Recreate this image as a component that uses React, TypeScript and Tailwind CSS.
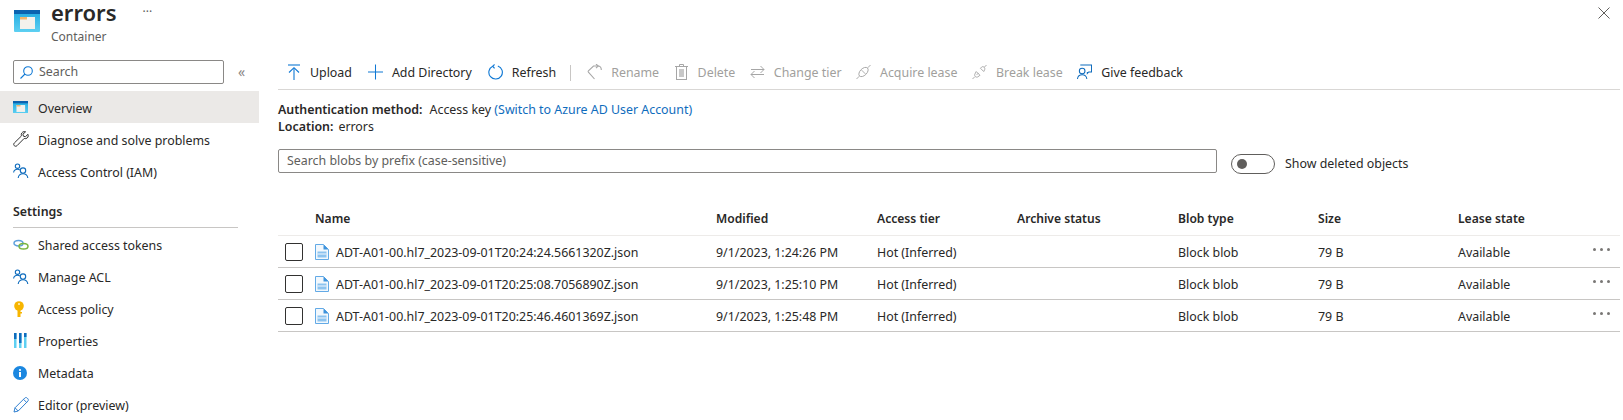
import React from "react";

const Users = () => (
  <svg width="16" height="16" viewBox="0 0 16 16" fill="none" stroke="#0f6cbd" strokeWidth="1.100">
    <circle cx="4.500" cy="3.200" r="2.200" />
    <path d="M0.600 9.500c.3-2 1.800-3.200 3.900-3.200 1 0 1.700.2 2.300.7" />
    <circle cx="10" cy="7.600" r="2.700" />
    <path d="M5.200 15c.3-2.600 2.200-4.200 4.800-4.200s4.500 1.600 4.800 4.200" />
  </svg>
);

const ContainerIcon = ({ s }: { s: number }) => (
  <svg width={s} height={(s * 22) / 26} viewBox="0 0 26 22">
    <defs>
      <linearGradient id={"cg" + s} x1="0" y1="0" x2="0" y2="1">
        <stop offset="0" stopColor="#1fa8e0" />
        <stop offset="1" stopColor="#5ed0f2" />
      </linearGradient>
    </defs>
    <rect x="0" y="0" width="26" height="22" rx="1" fill={"url(#cg" + s + ")"} />
    <rect x="0" y="0" width="26" height="4" fill="#0b63b0" />
    <rect x="6" y="7" width="15" height="12" fill="#f3f1ec" />
    <rect x="6" y="7" width="7" height="2.500" fill="#f2b56a" />
  </svg>
);

const Wrench = () => (
  <svg width="16" height="16" viewBox="0 0 16 16" fill="none" stroke="#333" strokeWidth="1">
    <path d="M15 3.300l-2.600 2.400-2-.5-.5-2L12.600.8C10.600.1 8.500 1.300 8.300 3.400c0 .6 0 1.100.2 1.500L1.300 12c-.9.900-.7 2 0 2.700s1.800.8 2.700 0l7.200-7.300c.5.200 1 .3 1.600.2 2-.3 3-2.400 2.200-4.300z" />
  </svg>
);

const Links = () => (
  <svg width="16" height="14" viewBox="0 0 16 14" fill="none" strokeWidth="1.500">
    <ellipse cx="5.500" cy="5.200" rx="4.500" ry="2.800" stroke="#5ea0dc" />
    <ellipse cx="10.500" cy="8.200" rx="4.500" ry="2.800" stroke="#7ab541" />
  </svg>
);

const Key = () => (
  <svg width="12" height="16" viewBox="0 0 12 16">
    <circle cx="6" cy="5" r="4.800" fill="#f7b500" />
    <rect x="4.500" y="6" width="3" height="10" fill="#f7b500" />
    <rect x="7" y="11" width="2" height="1.500" fill="#f7b500" />
    <circle cx="6" cy="3" r="1" fill="#fff3c4" />
  </svg>
);

const Props = () => (
  <svg width="14" height="16" viewBox="0 0 14 16">
    <rect x="1" y="0" width="2.500" height="15" fill="#5ed0f2" />
    <rect x="1" y="0" width="2.500" height="6" fill="#0f6cbd" />
    <rect x="6" y="0" width="2.500" height="15" fill="#5ed0f2" />
    <rect x="6" y="0" width="2.500" height="10" fill="#0f6cbd" />
    <rect x="11" y="0" width="2.500" height="15" fill="#5ed0f2" />
    <rect x="11" y="0" width="2.500" height="4" fill="#0f6cbd" />
  </svg>
);

const Info = () => (
  <svg width="14" height="14" viewBox="0 0 14 14">
    <circle cx="7" cy="7" r="7" fill="#1b87e0" />
    <rect x="6" y="6" width="2" height="5" fill="#fff" />
    <circle cx="7" cy="4" r="1.100" fill="#fff" />
  </svg>
);

const Pencil = () => (
  <svg width="16" height="16" viewBox="0 0 16 16" fill="none" stroke="#2f7fd0" strokeWidth="1">
    <path d="M1 15l1-4.200L11.800 1c.7-.6 1.700-.6 2.300 0l.8.800c.6.700.6 1.600 0 2.300L5.200 14z" />
    <path d="M2 10.800L5.200 14" />
    <path d="M10.500 2.300l3.200 3.200" />
  </svg>
);

const Upload = () => (
  <svg width="14" height="16" viewBox="0 0 14 16" fill="none" stroke="#0f78d4" strokeWidth="1.100">
    <path d="M1 1h12" />
    <path d="M7 16V4" />
    <path d="M2 8.500L7 3.700l5 4.800" />
  </svg>
);

const Plus = () => (
  <svg width="16" height="16" viewBox="0 0 16 16" fill="none" stroke="#0f78d4" strokeWidth="1.100">
    <path d="M8 0v16M0 8h16" />
  </svg>
);

const Refresh = () => (
  <svg width="16" height="16" viewBox="0 0 16 16" fill="none" stroke="#0f78d4" strokeWidth="1.200">
    <path d="M5 1.800A7.200 7.200 0 1 0 10.500 1.500" />
    <path d="M7 0L5 1.800l2 2.400" />
  </svg>
);

const Rename = () => (
  <svg width="15" height="16" viewBox="0 0 15 16" fill="none" stroke="#a6a6a6" strokeWidth="1.100">
    <path d="M10 2H6.500L1.400 6.800Q.8 7.500 1.400 8.200L7.500 15" />
    <path d="M9 0l2.200 2L9 4.200" />
    <path d="M11 2c2 0 3.300 1.300 3.300 4" />
  </svg>
);

const Trash = () => (
  <svg width="13" height="16" viewBox="0 0 13 16" fill="none" stroke="#a6a6a6" strokeWidth="1">
    <path d="M0 2.500h13M4.500 2.500V.5h4v2" />
    <rect x="1.500" y="2.500" width="10" height="13" />
    <rect x="4" y="5" width="5" height="8" fill="#c8c8c8" stroke="none" />
  </svg>
);

const Swap = () => (
  <svg width="15" height="14" viewBox="0 0 15 14" fill="none" stroke="#a6a6a6" strokeWidth="1">
    <path d="M1 4.500h13M10.500 1l3.500 3.500L10.500 8" />
    <path d="M14 9.500H1M4.500 6L1 9.500 4.500 13" />
  </svg>
);

const PlugClosed = () => (
  <svg width="16" height="16" viewBox="0 0 16 16" fill="none" stroke="#a6a6a6" strokeWidth="1">
    <path d="M0.500 15.500l3-3M12.500 3.500l3-3" />
    <ellipse cx="8" cy="8" rx="6" ry="3.600" transform="rotate(-45 8 8)" />
    <path d="M6 6l4 4" />
  </svg>
);

const PlugOpen = () => (
  <svg width="16" height="16" viewBox="0 0 16 16" fill="none" stroke="#a6a6a6" strokeWidth="1">
    <path d="M0.500 15.500l2.500-2.500M13 3l2.500-2.500" />
    <path d="M4.500 7.500l4 4-2.300 1.700c-1 .5-2 .3-2.700-.4s-.9-1.700-.4-2.700z" />
    <path d="M9 4l3.500 3.500 1-2c.3-1 .2-2-.5-2.600s-1.600-.8-2.500-.4z" />
    <path d="M5 11l2-2" />
  </svg>
);

const Feedback = () => (
  <svg width="16" height="16" viewBox="0 0 16 16" fill="none" stroke="#0f6cbd" strokeWidth="1.100">
    <path d="M3.500 0.500H15.500V8h-3l-1.500 1.500V8" />
    <circle cx="5.500" cy="7" r="3" />
    <path d="M0.500 15.500c.3-2.800 2.300-4.500 5-4.500s4.700 1.700 5 4.500" />
  </svg>
);

const FileIcon = () => (
  <svg width="14" height="16" viewBox="0 0 14 16">
    <path d="M0.500 0.500H8.500L13.500 5.500V15.500H0.500z" fill="#f2f8fd" stroke="#63aae6" />
    <path d="M8.500 0.500V5.500H13.500z" fill="#3f93dc" />
    <rect x="2.500" y="7.500" width="9" height="6" fill="#8cc3ef" />
    <rect x="2.500" y="9.500" width="9" height="1" fill="#f2f8fd" />
  </svg>
);

const SearchIcon = () => (
  <svg width="13" height="13" viewBox="0 0 13 13" fill="none" stroke="#0f78d4" strokeWidth="1.100">
    <circle cx="8" cy="5" r="4.300" />
    <path d="M5 8L0.500 12.500" />
  </svg>
);

const navTop = [
  { label: "Overview", icon: <ContainerIcon s={15} />, active: true },
  { label: "Diagnose and solve problems", icon: <Wrench /> },
  { label: "Access Control (IAM)", icon: <Users /> },
];
const navSettings = [
  { label: "Shared access tokens", icon: <Links /> },
  { label: "Manage ACL", icon: <Users /> },
  { label: "Access policy", icon: <Key /> },
  { label: "Properties", icon: <Props /> },
  { label: "Metadata", icon: <Info /> },
  { label: "Editor (preview)", icon: <Pencil /> },
];

const NavRow = ({ label, icon, active, low }: { label: string; icon: React.ReactNode; active?: boolean; low?: boolean }) => (
  <div className={"flex h-8 items-center pl-[13px] " + (active ? "bg-[#ebe9e7]" : "")}>
    <span className="flex w-[25px] shrink-0 items-center">{icon}</span>
    <span className={low ? "pt-[5px]" : "pt-[3px]"}>{label}</span>
  </div>
);

const Tool = ({ label, icon, off }: { label: string; icon: React.ReactNode; off?: boolean }) => (
  <span className={"flex items-center gap-[9px] " + (off ? "text-[#a19f9d]" : "")}>
    <span className="flex w-[15px] justify-center">{icon}</span>
    <span className="pt-[1px]">{label}</span>
  </span>
);

const files = [
  ["ADT-A01-00.hl7_2023-09-01T20:24:24.5661320Z.json", "9/1/2023, 1:24:26 PM"],
  ["ADT-A01-00.hl7_2023-09-01T20:25:08.7056890Z.json", "9/1/2023, 1:25:10 PM"],
  ["ADT-A01-00.hl7_2023-09-01T20:25:46.4601369Z.json", "9/1/2023, 1:25:48 PM"],
];

const cols = "grid grid-cols-[37px_401px_161px_140px_161px_140px_140px_1fr]";

export default function App() {
  return (
    <div className="relative flex h-[420px] w-[1623px] overflow-hidden bg-white font-['Noto_Sans',sans-serif] text-[12.4px] text-[#292827]">
      <aside className="w-[259px] shrink-0">
        <div className="flex h-[60px] items-start pl-[14px]">
          <div className="mt-[10px]">
            <ContainerIcon s={26} />
          </div>
          <div className="ml-[11px]">
            <div className="flex h-[24px] items-center">
              <span className="text-[22px] font-semibold leading-[24px]">errors</span>
              <span className="ml-[26px] text-[12px] leading-[18px] text-[#605e5c]">···</span>
            </div>
            <div className="mt-[5px] text-[12px] leading-[16px] text-[#605e5c]">Container</div>
          </div>
        </div>
        <div className="flex items-center pl-[13px]">
          <div className="flex h-[24px] w-[211px] items-center rounded-[2px] border border-[#8a8886] pl-[6px] text-[#605e5c]">
            <SearchIcon />
            <span className="ml-[6px] pt-[1px]">Search</span>
          </div>
          <span className="ml-[14px] text-[14px] leading-none text-[#8a8886]">«</span>
        </div>
        <div className="mt-[7px]">
          {navTop.map((n) => (
            <NavRow key={n.label} {...n} low />
          ))}
        </div>
        <div className="mx-[13px] mt-[16px] w-[225px] border-b border-[#c8c6c4] pb-[6px] font-semibold leading-[18px]">Settings</div>
        <div className="mt-[1px]">
          {navSettings.map((n) => (
            <NavRow key={n.label} {...n} />
          ))}
        </div>
      </aside>

      <main className="flex-1 pl-[19px] pr-[3px]">
        <div className="mt-[56px] flex h-[34px] items-center border-b border-[#d9d7d5] pl-[8px]">
          <div className="flex items-center gap-[16px]">
            <Tool label="Upload" icon={<Upload />} />
            <Tool label="Add Directory" icon={<Plus />} />
            <Tool label="Refresh" icon={<Refresh />} />
          </div>
          <span className="ml-[14px] mr-[16px] h-[16px] w-px bg-[#c8c6c4]" />
          <div className="flex items-center gap-[14.5px]">
            <Tool label="Rename" icon={<Rename />} off />
            <Tool label="Delete" icon={<Trash />} off />
            <Tool label="Change tier" icon={<Swap />} off />
            <Tool label="Acquire lease" icon={<PlugClosed />} off />
            <Tool label="Break lease" icon={<PlugOpen />} off />
            <Tool label="Give feedback" icon={<Feedback />} />
          </div>
        </div>
        <div className="mt-[11px] leading-[17px]">
          <div>
            <b className="font-semibold">Authentication method:</b>
            <span className="ml-[7px]">Access key</span>{" "}
            <span className="text-[#0f6cbd]">(Switch to Azure AD User Account)</span>
          </div>
          <div>
            <b className="font-semibold">Location:</b>
            <span className="ml-[5px]">errors</span>
          </div>
        </div>
        <div className="mt-[14px] flex items-start">
          <div className="flex h-[24px] w-[939px] items-center rounded-[2px] border border-[#8a8886] pl-[8px] pt-[1px] text-[#605e5c]">
            Search blobs by prefix (case-sensitive)
          </div>
          <div className="ml-[14px] mt-[5px] flex items-center">
            <span className="flex h-[20px] w-[44px] items-center rounded-full border border-[#605e5c] pl-[5px]">
              <span className="h-[10px] w-[10px] rounded-full bg-[#605e5c]" />
            </span>
            <span className="ml-[10px]">Show deleted objects</span>
          </div>
        </div>

        <div className={cols + " mt-[33px] h-[29px] items-center border-b border-[#edebe9] pb-[4px] text-[12.1px] font-semibold"}>
          <span />
          <span>Name</span>
          <span>Modified</span>
          <span>Access tier</span>
          <span>Archive status</span>
          <span>Blob type</span>
          <span>Size</span>
          <span>Lease state</span>
        </div>
        {files.map(([name, date]) => (
          <div key={name} className={cols + " h-[32px] items-center border-b border-[#c8c6c4] pt-[3px]"}>
            <span className="-mt-[3px] ml-[7px] h-[18px] w-[18px] rounded-[2px] border border-[#323130]" />
            <span className="flex items-center gap-[7px]">
              <span className="-mt-[2px] flex">
                <FileIcon />
              </span>
              {name}
            </span>
            <span>{date}</span>
            <span>Hot (Inferred)</span>
            <span />
            <span>Block blob</span>
            <span>79 B</span>
            <span className="flex items-center justify-between pr-[10px]">
              Available
              <span className="-mt-[6px] flex gap-[4px]">
                <i className="h-[3px] w-[3px] rounded-full bg-[#797775]" />
                <i className="h-[3px] w-[3px] rounded-full bg-[#797775]" />
                <i className="h-[3px] w-[3px] rounded-full bg-[#797775]" />
              </span>
            </span>
          </div>
        ))}
      </main>

      <svg className="absolute left-[1598px] top-[7px]" width="12" height="12" viewBox="0 0 12 12" stroke="#605e5c" strokeWidth="1">
        <path d="M0.500 0.500l11 11M11.500 0.500l-11 11" />
      </svg>
    </div>
  );
}
